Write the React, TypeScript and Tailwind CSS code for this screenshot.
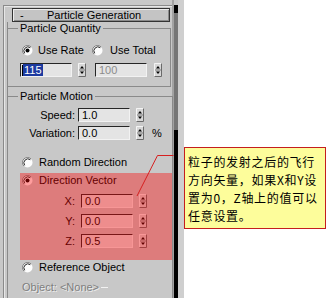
import React from 'react';

interface RadioProps {
  checked?: boolean;
}

const Radio: React.FC<RadioProps> = ({ checked }) => (
  <svg width="11" height="11" viewBox="0 0 11 11" className="shrink-0">
    <circle cx="5.5" cy="5.5" r="5" fill="#fdfdfd" />
    <path d="M1.96 9.04 A5 5 0 0 1 9.04 1.96" stroke="#7c7c7c" strokeWidth="1" fill="none" />
    <path d="M2.7 8.3 A4 4 0 0 1 8.3 2.7" stroke="#2a2a2a" strokeWidth="1" fill="none" />
    {checked && <circle cx="5.5" cy="5.5" r="2" fill="#000" />}
  </svg>
);

const Spin: React.FC = () => (
  <svg width="8" height="14" viewBox="0 0 8 14" className="shrink-0">
    <rect x="0" y="0" width="8" height="14" fill="#d6d6d6" />
    <path d="M0.5 13.5 V0.5 H7.5" stroke="#f4f4f4" fill="none" />
    <path d="M0.5 13.5 H7.5 V0.5" stroke="#6a6a6a" fill="none" />
    <line x1="1" y1="7" x2="7" y2="7" stroke="#7a7a7a" />
    <path d="M2 5.5 L4 3 L6 5.5 Z" fill="#000" />
    <path d="M2 8.5 L4 11 L6 8.5 Z" fill="#000" />
  </svg>
);

interface FieldProps {
  value: string;
  disabled?: boolean;
  selected?: boolean;
}

const Field: React.FC<FieldProps> = ({ value, disabled, selected }) => (
  <div className="flex h-[14px] w-[52px] shrink-0 items-center border border-t-[#262626] border-l-[#262626] border-r-[#f2f2f2] border-b-[#f2f2f2] bg-[#e4e4e4] pl-[1px] leading-[12px]">
    {selected ? (
      <>
        <span className="h-[11px] w-[1px] bg-black" />
        <span className="bg-[#1c3aa0] px-[1px] text-white">{value}</span>
      </>
    ) : (
      <span className={disabled ? 'pl-[2px] text-[#8c8c8c]' : 'pl-[2px]'}>{value}</span>
    )}
  </div>
);

const Row: React.FC<{ label: string; labelW: string; value: string; suffix?: string }> = ({ label, labelW, value, suffix }) => (
  <div className="flex h-[14px] items-center">
    <span className={`${labelW} shrink-0 text-right`}>{label}</span>
    <Field value={value} />
    <span className="ml-[6px]">
      <Spin />
    </span>
    {suffix && <span className="ml-[8px]">{suffix}</span>}
  </div>
);

const App: React.FC = () => {
  return (
    <div className="relative flex h-[298px] w-[327px] overflow-hidden bg-white font-['Liberation_Sans',Arial,sans-serif] text-[11px] leading-[14px] text-black">
      {/* command panel */}
      <div className="h-full w-[174px] shrink-0 border-r-2 border-[#a2a2a2] bg-[#c8c8c8] pl-[3px] pt-[5px]">
        <div className="flex h-full flex-col border-l border-t border-[#8a8a8a] pl-[3px] pt-[2px] shadow-[inset_1px_1px_0_#e6e6e6]">
          <div className="ml-[5px] flex h-[14px] w-[158px] items-center border border-[#333] bg-[#c4c4c4] shadow-[inset_1px_1px_0_#ededed,inset_-1px_-1px_0_#8a8a8a]">
            <span className="ml-[7px] w-[20px]">-</span>
            <span className="ml-[7px]">Particle Generation</span>
          </div>

          <div className="flex flex-1 flex-col border-l border-[#8a8a8a]">
            <fieldset className="w-[163px] border-t border-r border-b border-[#8a8a8a] pb-[9px]">
              <legend className="ml-[10px] bg-[#c8c8c8] px-[2px] leading-[13px]">Particle Quantity</legend>
              <div className="mt-[8px] flex h-[14px] items-center pl-[14px]">
                <div className="flex w-[70px] items-center gap-[5px]">
                  <Radio checked />
                  <span>Use Rate</span>
                </div>
                <div className="flex items-center gap-[7px]">
                  <Radio />
                  <span>Use Total</span>
                </div>
              </div>
              <div className="mt-[6px] flex h-[14px] items-center pl-[12px]">
                <Field value="115" selected />
                <span className="ml-[6px]">
                  <Spin />
                </span>
                <span className="ml-[9px]">
                  <Field value="100" disabled />
                </span>
                <span className="ml-[7px]">
                  <Spin />
                </span>
              </div>
            </fieldset>

            <fieldset className="mt-[3px] w-[163px] flex-1 border-t border-r border-[#8a8a8a]">
              <legend className="ml-[10px] bg-[#c8c8c8] px-[2px] leading-[13px]">Particle Motion</legend>
              <div className="mt-[5px]">
                <Row label="Speed:" labelW="w-[70px] pr-[3px]" value="1.0" />
              </div>
              <div className="mt-[4px]">
                <Row label="Variation:" labelW="w-[70px] pr-[3px]" value="0.0" suffix="%" />
              </div>
              <div className="mt-[15px] flex h-[14px] items-center gap-[6px] pl-[14px]">
                <Radio />
                <span>Random Direction</span>
              </div>

              <div className="relative ml-[12px] mt-[4px] w-[152px] pb-[12px]">
                <div className="flex h-[14px] items-center gap-[6px] pl-[2px]">
                  <Radio checked />
                  <span>Direction Vector</span>
                </div>
                <div className="mt-[7px]">
                  <Row label="X:" labelW="w-[61px] pr-[6px]" value="0.0" />
                </div>
                <div className="mt-[6px]">
                  <Row label="Y:" labelW="w-[61px] pr-[6px]" value="0.0" />
                </div>
                <div className="mt-[6px]">
                  <Row label="Z:" labelW="w-[61px] pr-[6px]" value="0.5" />
                </div>
                <div className="pointer-events-none absolute inset-0 bg-[rgba(255,0,0,0.38)]" />
              </div>

              <div className="flex h-[14px] items-center gap-[6px] pl-[14px]">
                <Radio />
                <span>Reference Object</span>
              </div>
              <div className="mt-[6px] flex h-[14px] items-center pl-[14px]">
                <span className="text-[#7e7e7e] [text-shadow:1px_1px_0_#ececec]">Object: &lt;None&gt;</span>
                <span className="ml-[2px] h-[1px] w-[7px] bg-[#f2f2f2]" />
              </div>
            </fieldset>
          </div>
        </div>
      </div>

      {/* scrollbar */}
      <div className="flex h-full w-[4px] shrink-0 flex-col">
        <div className="h-[5px] bg-[#c8c8c8]" />
        <div className="h-[8px] bg-black" />
        <div className="h-[117px] bg-[#767676]" />
        <div className="flex-1 bg-black" />
      </div>
      <div className="h-full w-[6px] shrink-0 bg-[#cfcfcf]" />

      {/* note */}
      <div className="flex-1 pt-[147px]">
        <div className="h-[82px] w-[142px] border border-[#c41e1e] bg-[#fdfd9b] pl-[3px] pt-[5px] font-['Noto_Sans_CJK_SC',sans-serif] text-[12px] leading-[18px] tracking-[0.7px] whitespace-nowrap text-black">
          <div>粒子的发射之后的飞行</div>
          <div>方向矢量，如果X和Y设</div>
          <div>置为0，Z轴上的值可以</div>
          <div>任意设置。</div>
        </div>
      </div>

      <svg className="pointer-events-none absolute inset-0" width="327" height="298" viewBox="0 0 327 298">
        <polyline points="173.5,155.5 157.5,155.5 137,196" fill="none" stroke="#d62020" strokeWidth="1" />
      </svg>
    </div>
  );
};

export default App;
